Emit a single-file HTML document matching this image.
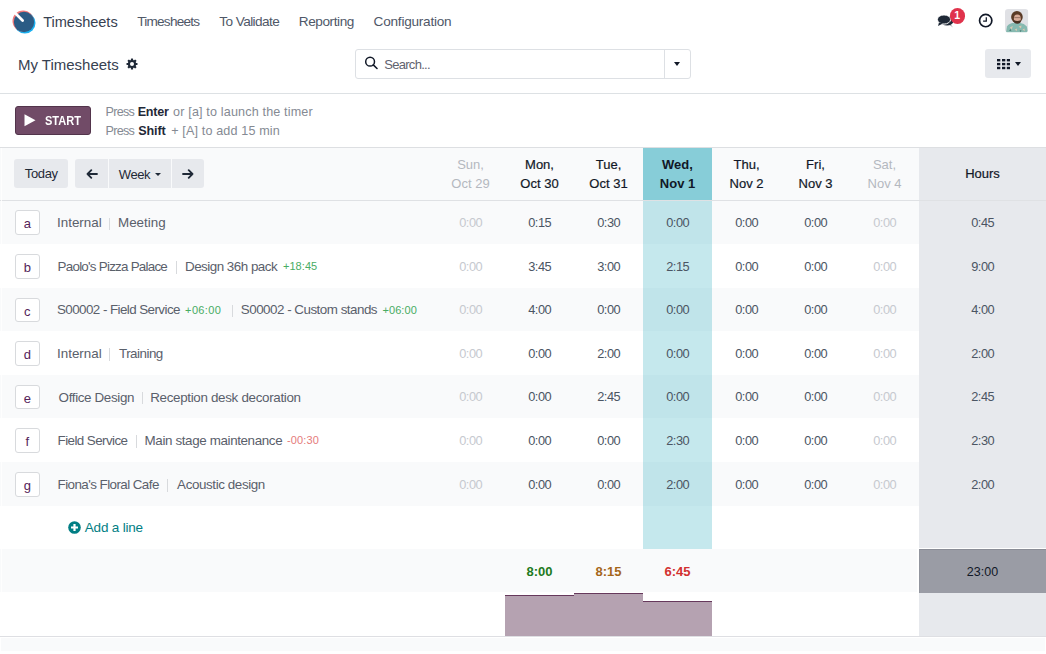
<!DOCTYPE html><html><head><meta charset="utf-8"><style>
html,body{margin:0;padding:0;}
body{width:1046px;height:654px;overflow:hidden;position:relative;background:#fff;font-family:"Liberation Sans",sans-serif;font-size:13px;color:#374151;}
.a{position:absolute;}
.nw{white-space:nowrap;}
.brand{left:43.2px;top:14px;letter-spacing:-0.044px;font-size:14.6px;color:#374151;}
.menu{top:13.6px;font-size:13.6px;color:#4F5868;}
.bc{left:17.9px;top:55.7px;font-size:15px;color:#374151;}
.search{left:355px;top:49px;width:335.5px;height:29.7px;border:1px solid #DDE0E4;border-radius:3px;box-sizing:border-box;}
.sw{left:985px;top:49px;width:46px;height:29px;background:#E7E9ED;border-radius:3px;}
.start{left:15px;top:105.5px;width:75.5px;height:29.5px;background:#714B67;border:1px solid #52344B;box-sizing:border-box;border-radius:3px;}
.hint{font-size:12.6px;color:#858A93;}
.hint b{color:#111827;}
.btn{background:#E7E9ED;border-radius:3px;color:#1F2937;height:29px;top:159px;}
.hd{top:148px;height:52px;width:69px;text-align:center;font-size:13px;line-height:18.6px;color:#111827;-webkit-text-stroke:0.2px #111827;}
.hd div{position:absolute;left:0;width:69px;}
.key{left:15px;width:24.6px;height:24.6px;border:1px solid #D8DADD;border-radius:3px;box-sizing:border-box;background:#fff;color:#55245A;text-align:center;font-size:13px;}
.lbl{color:#5A606B;font-size:13.4px;}
.sep{color:#D8DADD;}
.val{width:69px;text-align:center;color:#4B5563;font-size:12.8px;letter-spacing:-0.45px;text-indent:0.45px;}
.mut{color:#C6C9CF;}
.plus{color:#48AC63;font-size:11px;}
.minus{color:#E57B7B;font-size:11px;}
</style></head><body>
<svg class="a" style="left:12px;top:9.5px" width="24" height="24" viewBox="0 0 24 24">
  <circle cx="12.9" cy="12.9" r="10.6" fill="#1AB0F0"/>
  <circle cx="11.1" cy="11.1" r="10.6" fill="#F07878"/>
  <circle cx="12" cy="12" r="10.2" fill="#2B5C85"/>
  <line x1="3.8" y1="3.8" x2="10.6" y2="10.4" stroke="#fff" stroke-width="2.8" stroke-linecap="round"/>
</svg>
<div class="a nw brand">Timesheets</div>
<div class="a nw menu" style="left:137.2px;letter-spacing:-0.756px">Timesheets</div>
<div class="a nw menu" style="left:219.2px;letter-spacing:-0.56px">To Validate</div>
<div class="a nw menu" style="left:298.8px;letter-spacing:-0.425px">Reporting</div>
<div class="a nw menu" style="left:373.6px;letter-spacing:-0.233px">Configuration</div>
<div class="a nw bc">My Timesheets</div>
<div class="a search"></div>
<div class="a" style="left:664px;top:49px;width:1px;height:29.5px;background:#DDE0E4"></div>
<div class="a nw" style="left:384.2px;top:56.5px;font-size:13px;letter-spacing:-0.7px;color:#5F636F">Search...</div>
<div class="a sw"></div>
<div class="a" style="left:0;top:92.5px;width:1046px;height:1px;background:#DDE1E4"></div>
<div class="a start"></div>
<div class="a nw hint" style="left:105.5px;top:104.9px;letter-spacing:-0.725px;">Press</div>
<div class="a nw hint" style="left:137.7px;top:104.9px;letter-spacing:-0.275px;font-weight:bold;color:#1F2937;">Enter</div>
<div class="a nw hint" style="left:173.1px;top:104.9px;letter-spacing:0.152px;">or [a] to launch the timer</div>
<div class="a nw hint" style="left:105.5px;top:124px;letter-spacing:-0.725px;">Press</div>
<div class="a nw hint" style="left:138.2px;top:124px;letter-spacing:-0.1px;font-weight:bold;color:#1F2937;">Shift</div>
<div class="a nw hint" style="left:171.2px;top:124px;letter-spacing:0.139px;">+ [A] to add 15 min</div>
<div class="a" style="left:0;top:147px;width:1046px;height:1px;background:#DDDFE2"></div>
<div class="a" style="left:0;top:148px;width:919px;height:52px;background:#F9FAFB"></div>
<div class="a" style="left:0;top:200px;width:919px;height:43.5px;background:#F9FAFB"></div>
<div class="a" style="left:0;top:288.1px;width:919px;height:42.8px;background:#F9FAFB"></div>
<div class="a" style="left:0;top:374.9px;width:919px;height:43.0px;background:#F9FAFB"></div>
<div class="a" style="left:0;top:461.9px;width:919px;height:43.9px;background:#F9FAFB"></div>
<div class="a" style="left:0;top:548.9px;width:919px;height:43.5px;background:#F9FAFB"></div>
<div class="a" style="left:643px;top:148px;width:69px;height:52px;background:#87CDD8"></div>
<div class="a" style="left:643px;top:200px;width:69px;height:348.9px;background:rgba(23,162,184,0.25)"></div>
<div class="a" style="left:919px;top:148px;width:127px;height:488px;background:#E7E9ED"></div>
<div class="a" style="left:0;top:199.5px;width:1046px;height:1px;background:#DFE1E4"></div>
<div class="a hd" style="left:436px;color:#B4B8BF;-webkit-text-stroke:0;"><div style="top:8px">Sun,</div><div style="top:26.5px">Oct 29</div></div>
<div class="a hd" style="left:505px;"><div style="top:8px">Mon,</div><div style="top:26.5px">Oct 30</div></div>
<div class="a hd" style="left:574px;"><div style="top:8px">Tue,</div><div style="top:26.5px">Oct 31</div></div>
<div class="a hd" style="left:643px;font-weight:bold;-webkit-text-stroke:0;"><div style="top:8px">Wed,</div><div style="top:26.5px">Nov 1</div></div>
<div class="a hd" style="left:712px;"><div style="top:8px">Thu,</div><div style="top:26.5px">Nov 2</div></div>
<div class="a hd" style="left:781px;"><div style="top:8px">Fri,</div><div style="top:26.5px">Nov 3</div></div>
<div class="a hd" style="left:850px;color:#B4B8BF;-webkit-text-stroke:0;"><div style="top:8px">Sat,</div><div style="top:26.5px">Nov 4</div></div>
<div class="a nw" style="left:919px;top:166px;width:127px;text-align:center;color:#111827;-webkit-text-stroke:0.2px #111827">Hours</div>
<div class="a btn" style="left:14px;width:54px"></div>
<div class="a btn" style="left:75px;width:129px"></div>
<div class="a key" style="top:209.95px;line-height:26.3px">a</div>
<div class="a nw lbl" style="left:57.0px;top:215.2px;letter-spacing:0.0px">Internal</div>
<div class="a nw lbl" style="left:118.0px;top:215.2px;letter-spacing:0.0px">Meeting</div>
<div class="a sep" style="left:109.0px;top:217.6px;width:1px;height:12.5px;background:#D8DADD"></div>
<div class="a nw val mut" style="left:436px;top:215.0px">0:00</div>
<div class="a nw val" style="left:505px;top:215.0px">0:15</div>
<div class="a nw val" style="left:574px;top:215.0px">0:30</div>
<div class="a nw val" style="left:643px;top:215.0px">0:00</div>
<div class="a nw val" style="left:712px;top:215.0px">0:00</div>
<div class="a nw val" style="left:781px;top:215.0px">0:00</div>
<div class="a nw val mut" style="left:850px;top:215.0px">0:00</div>
<div class="a nw val" style="left:919px;width:127px;top:215.0px">0:45</div>
<div class="a key" style="top:254.0px;line-height:26.3px">b</div>
<div class="a nw lbl" style="left:57.6px;top:258.7px;letter-spacing:-0.758px">Paolo&#39;s Pizza Palace</div>
<div class="a nw lbl" style="left:185.0px;top:258.7px;letter-spacing:-0.507px">Design 36h pack</div>
<div class="a nw plus" style="left:282.9px;top:260.3px;letter-spacing:0.08px">+18:45</div>
<div class="a sep" style="left:176.1px;top:261.1px;width:1px;height:12.5px;background:#D8DADD"></div>
<div class="a nw val mut" style="left:436px;top:258.5px">0:00</div>
<div class="a nw val" style="left:505px;top:258.5px">3:45</div>
<div class="a nw val" style="left:574px;top:258.5px">3:00</div>
<div class="a nw val" style="left:643px;top:258.5px">2:15</div>
<div class="a nw val" style="left:712px;top:258.5px">0:00</div>
<div class="a nw val" style="left:781px;top:258.5px">0:00</div>
<div class="a nw val mut" style="left:850px;top:258.5px">0:00</div>
<div class="a nw val" style="left:919px;width:127px;top:258.5px">9:00</div>
<div class="a key" style="top:297.7px;line-height:26.3px">c</div>
<div class="a nw lbl" style="left:57.0px;top:302.1px;letter-spacing:-0.571px">S00002 - Field Service</div>
<div class="a nw plus" style="left:185.1px;top:303.7px;letter-spacing:0.36px">+06:00</div>
<div class="a nw lbl" style="left:240.8px;top:302.1px;letter-spacing:-0.505px">S00002 - Custom stands</div>
<div class="a nw plus" style="left:382.4px;top:303.7px;letter-spacing:0.1px">+06:00</div>
<div class="a sep" style="left:232.2px;top:304.5px;width:1px;height:12.5px;background:#D8DADD"></div>
<div class="a nw val mut" style="left:436px;top:301.9px">0:00</div>
<div class="a nw val" style="left:505px;top:301.9px">4:00</div>
<div class="a nw val" style="left:574px;top:301.9px">0:00</div>
<div class="a nw val" style="left:643px;top:301.9px">0:00</div>
<div class="a nw val" style="left:712px;top:301.9px">0:00</div>
<div class="a nw val" style="left:781px;top:301.9px">0:00</div>
<div class="a nw val mut" style="left:850px;top:301.9px">0:00</div>
<div class="a nw val" style="left:919px;width:127px;top:301.9px">4:00</div>
<div class="a key" style="top:341.1px;line-height:26.3px">d</div>
<div class="a nw lbl" style="left:57.0px;top:345.7px;letter-spacing:0.0px">Internal</div>
<div class="a nw lbl" style="left:119.0px;top:345.7px;letter-spacing:-0.514px">Training</div>
<div class="a sep" style="left:108.9px;top:348.1px;width:1px;height:12.5px;background:#D8DADD"></div>
<div class="a nw val mut" style="left:436px;top:345.5px">0:00</div>
<div class="a nw val" style="left:505px;top:345.5px">0:00</div>
<div class="a nw val" style="left:574px;top:345.5px">2:00</div>
<div class="a nw val" style="left:643px;top:345.5px">0:00</div>
<div class="a nw val" style="left:712px;top:345.5px">0:00</div>
<div class="a nw val" style="left:781px;top:345.5px">0:00</div>
<div class="a nw val mut" style="left:850px;top:345.5px">0:00</div>
<div class="a nw val" style="left:919px;width:127px;top:345.5px">2:00</div>
<div class="a key" style="top:384.6px;line-height:26.3px">e</div>
<div class="a nw lbl" style="left:58.6px;top:389.5px;letter-spacing:-0.358px">Office Design</div>
<div class="a nw lbl" style="left:150.2px;top:389.5px;letter-spacing:-0.321px">Reception desk decoration</div>
<div class="a sep" style="left:141.8px;top:391.9px;width:1px;height:12.5px;background:#D8DADD"></div>
<div class="a nw val mut" style="left:436px;top:389.3px">0:00</div>
<div class="a nw val" style="left:505px;top:389.3px">0:00</div>
<div class="a nw val" style="left:574px;top:389.3px">2:45</div>
<div class="a nw val" style="left:643px;top:389.3px">0:00</div>
<div class="a nw val" style="left:712px;top:389.3px">0:00</div>
<div class="a nw val" style="left:781px;top:389.3px">0:00</div>
<div class="a nw val mut" style="left:850px;top:389.3px">0:00</div>
<div class="a nw val" style="left:919px;width:127px;top:389.3px">2:45</div>
<div class="a key" style="top:428.1px;line-height:26.3px">f</div>
<div class="a nw lbl" style="left:57.6px;top:432.8px;letter-spacing:-0.583px">Field Service</div>
<div class="a nw lbl" style="left:144.6px;top:432.8px;letter-spacing:-0.376px">Main stage maintenance</div>
<div class="a nw minus" style="left:286.9px;top:434.4px;letter-spacing:0.16px">-00:30</div>
<div class="a sep" style="left:136.0px;top:435.2px;width:1px;height:12.5px;background:#D8DADD"></div>
<div class="a nw val mut" style="left:436px;top:432.6px">0:00</div>
<div class="a nw val" style="left:505px;top:432.6px">0:00</div>
<div class="a nw val" style="left:574px;top:432.6px">0:00</div>
<div class="a nw val" style="left:643px;top:432.6px">2:30</div>
<div class="a nw val" style="left:712px;top:432.6px">0:00</div>
<div class="a nw val" style="left:781px;top:432.6px">0:00</div>
<div class="a nw val mut" style="left:850px;top:432.6px">0:00</div>
<div class="a nw val" style="left:919px;width:127px;top:432.6px">2:30</div>
<div class="a key" style="top:472.05px;line-height:26.3px">g</div>
<div class="a nw lbl" style="left:57.6px;top:476.7px;letter-spacing:-0.567px">Fiona&#39;s Floral Cafe</div>
<div class="a nw lbl" style="left:177.1px;top:476.7px;letter-spacing:-0.4px">Acoustic design</div>
<div class="a sep" style="left:167.3px;top:479.1px;width:1px;height:12.5px;background:#D8DADD"></div>
<div class="a nw val mut" style="left:436px;top:476.5px">0:00</div>
<div class="a nw val" style="left:505px;top:476.5px">0:00</div>
<div class="a nw val" style="left:574px;top:476.5px">0:00</div>
<div class="a nw val" style="left:643px;top:476.5px">2:00</div>
<div class="a nw val" style="left:712px;top:476.5px">0:00</div>
<div class="a nw val" style="left:781px;top:476.5px">0:00</div>
<div class="a nw val mut" style="left:850px;top:476.5px">0:00</div>
<div class="a nw val" style="left:919px;width:127px;top:476.5px">2:00</div>
<div class="a" style="left:1px;top:148px;width:1px;height:489px;background:#fff;opacity:0.8"></div>
<svg class="a" style="left:125px;top:57.2px" width="14" height="14" viewBox="0 0 14 14">
<g transform="translate(7,7)" fill="#1F2937">
<circle r="4.1"/>
<rect x="-1.1" y="-5.5" width="2.2" height="11" rx="0.5"/>
<rect x="-1.1" y="-5.5" width="2.2" height="11" rx="0.5" transform="rotate(45)"/>
<rect x="-1.1" y="-5.5" width="2.2" height="11" rx="0.5" transform="rotate(90)"/>
<rect x="-1.1" y="-5.5" width="2.2" height="11" rx="0.5" transform="rotate(135)"/>
<circle r="2" fill="#fff"/>
</g></svg>
<svg class="a" style="left:364px;top:56px" width="15" height="14" viewBox="0 0 15 14">
<circle cx="6.1" cy="5.7" r="4.4" fill="none" stroke="#111827" stroke-width="1.5"/>
<line x1="9.3" y1="8.9" x2="13" y2="12.5" stroke="#111827" stroke-width="1.6" stroke-linecap="round"/>
</svg>
<div class="a" style="left:673.5px;top:62.4px;width:0;height:0;border-left:3.9px solid transparent;border-right:3.9px solid transparent;border-top:4.1px solid #111827"></div>
<svg class="a" style="left:996.7px;top:59px" width="13.5" height="10.5" viewBox="0 0 13.5 10.5"><rect x="0" y="0" width="3.3" height="2.4" fill="#111827"/><rect x="0" y="3.9" width="3.3" height="2.4" fill="#111827"/><rect x="0" y="7.8" width="3.3" height="2.4" fill="#111827"/><rect x="5.0" y="0" width="3.3" height="2.4" fill="#111827"/><rect x="5.0" y="3.9" width="3.3" height="2.4" fill="#111827"/><rect x="5.0" y="7.8" width="3.3" height="2.4" fill="#111827"/><rect x="9.8" y="0" width="3.3" height="2.4" fill="#111827"/><rect x="9.8" y="3.9" width="3.3" height="2.4" fill="#111827"/><rect x="9.8" y="7.8" width="3.3" height="2.4" fill="#111827"/></svg>
<div class="a" style="left:1015px;top:62px;width:0;height:0;border-left:3.8px solid transparent;border-right:3.8px solid transparent;border-top:4px solid #111827"></div>
<svg class="a" style="left:936px;top:12px" width="20" height="17" viewBox="0 0 20 17">
<ellipse cx="11" cy="9" rx="6.5" ry="4.5" fill="#1F2937"/>
<path d="M13 12 L17 15.5 L14 12 Z" fill="#1F2937"/>
<ellipse cx="8" cy="7.5" rx="6.6" ry="4.6" fill="#1F2937" stroke="#fff" stroke-width="1"/>
<path d="M3 10.5 L2 14 L7 11.5 Z" fill="#1F2937"/>
</svg>
<div class="a" style="left:949.5px;top:8.2px;width:15.5px;height:15.5px;border-radius:50%;background:#E0334C;color:#fff;font-size:10.5px;font-weight:bold;text-align:center;line-height:15.5px">1</div>
<svg class="a" style="left:978px;top:13.3px" width="16" height="16" viewBox="0 0 16 16">
<circle cx="7.7" cy="7.6" r="6.15" fill="none" stroke="#111827" stroke-width="1.7"/>
<path d="M8.3 4.2 V8.2 H5.1" fill="none" stroke="#111827" stroke-width="1.25"/>
</svg>
<svg class="a" style="left:1005.4px;top:9.2px" width="23.3" height="23.4" viewBox="0 0 24 24">
<defs><clipPath id="av"><rect width="24" height="24" rx="3.2"/></clipPath>
<filter id="bl"><feGaussianBlur stdDeviation="0.45"/></filter></defs>
<g clip-path="url(#av)">
<rect width="24" height="24" fill="#E0E1E5"/>
<g filter="url(#bl)">
<path d="M1 24.5 L2 18 Q4 15 9 14.2 L15 14.2 Q20 15 22.5 18 L23.5 24.5 Z" fill="#86B9B0"/>
<path d="M5 19 L8 17.5 L7 21 Z M14 18 L17 17 L16.5 20 Z M10 21 L12.5 20 L12 23 Z M18 21 L20 20 L20.5 23 Z" fill="#D8C8B0"/>
<path d="M4 22 L6 20.5 L6.5 23 Z M15 22 L17 21.5 L16 24 Z" fill="#4E7F78"/>
<ellipse cx="12.3" cy="8.2" rx="6" ry="6.2" fill="#5A3A26"/>
<ellipse cx="12.7" cy="10" rx="3.6" ry="4.4" fill="#D9AC98"/>
<path d="M9.1 11.2 Q12.7 13.5 16.3 11.2 L16 13.8 Q12.7 16.6 9.4 13.8 Z" fill="#4A3024"/>
<rect x="9.6" y="8.6" width="6.4" height="0.7" fill="#7A5A50"/>
</g>
</g></svg>
<svg class="a" style="left:23.5px;top:114px" width="12" height="12.5" viewBox="0 0 12 12.5"><path d="M0.5 0.3 L11.5 6.25 L0.5 12.2 Z" fill="#fff"/></svg>
<div class="a nw" style="left:44.5px;top:112.8px;color:#fff;font-weight:bold;font-size:13px;transform:scaleX(0.85);transform-origin:0 0">START</div>
<div class="a" style="left:107.5px;top:159px;width:1px;height:29px;background:#F9FAFB"></div>
<div class="a" style="left:170.5px;top:159px;width:1px;height:29px;background:#F9FAFB"></div>
<div class="a nw" style="left:24.8px;top:166px;letter-spacing:-0.375px;color:#1F2937">Today</div>
<div class="a nw" style="left:118.8px;top:166.5px;letter-spacing:-0.4px;color:#1F2937">Week</div>
<div class="a" style="left:154.5px;top:172.5px;width:0;height:0;border-left:3.3px solid transparent;border-right:3.3px solid transparent;border-top:3.5px solid #1F2937"></div>
<svg class="a" style="left:86px;top:169px" width="12" height="10" viewBox="0 0 12 10">
<path d="M11 5 H1.5 M5.3 1.2 L1.5 5 L5.3 8.8" fill="none" stroke="#1F2937" stroke-width="1.8" stroke-linecap="round" stroke-linejoin="round"/></svg>
<svg class="a" style="left:182px;top:169px" width="12" height="10" viewBox="0 0 12 10">
<path d="M1 5 H10.5 M6.7 1.2 L10.5 5 L6.7 8.8" fill="none" stroke="#1F2937" stroke-width="1.8" stroke-linecap="round" stroke-linejoin="round"/></svg>
<svg class="a" style="left:68px;top:520.6px" width="13" height="13" viewBox="0 0 13 13">
<circle cx="6.5" cy="6.5" r="6.3" fill="#017E84"/>
<path d="M6.5 3 V10 M3 6.5 H10" stroke="#fff" stroke-width="2.2"/></svg>
<div class="a nw" style="left:84.8px;top:520.3px;color:#017E84;font-size:13.5px;letter-spacing:-0.2px">Add a line</div>
<div class="a nw" style="left:505px;top:564.3px;width:69px;text-align:center;font-weight:bold;font-size:13px;color:#1E7B1E">8:00</div>
<div class="a nw" style="left:574px;top:564.3px;width:69px;text-align:center;font-weight:bold;font-size:13px;color:#A5661A">8:15</div>
<div class="a nw" style="left:643px;top:564.3px;width:69px;text-align:center;font-weight:bold;font-size:13px;color:#D2312F">6:45</div>
<div class="a" style="left:917px;top:548px;width:129px;height:45px;background:#fff"></div>
<div class="a" style="left:919px;top:549px;width:127px;height:44px;background:#9A9CA5;border-top:1px solid #8A8D96;border-left:1px solid #92959E;box-sizing:border-box"></div>
<div class="a nw" style="left:919px;top:565px;width:127px;text-align:center;font-size:12.5px;color:#111827">23:00</div>
<div class="a" style="left:505px;top:595px;width:69px;height:41px;background:#B5A2B1;border-top:1.4px solid #66395C;box-sizing:border-box"></div>
<div class="a" style="left:574px;top:592.8px;width:69px;height:43.200000000000045px;background:#B5A2B1;border-top:1.4px solid #66395C;box-sizing:border-box"></div>
<div class="a" style="left:643px;top:600.8px;width:69px;height:35.200000000000045px;background:#B5A2B1;border-top:1.4px solid #66395C;box-sizing:border-box"></div>
<div class="a" style="left:0;top:636px;width:1046px;height:1px;background:#DEDFE3"></div>
<div class="a" style="left:1px;top:638px;width:1044px;height:13px;background:#F9FAFB"></div>
</body></html>
